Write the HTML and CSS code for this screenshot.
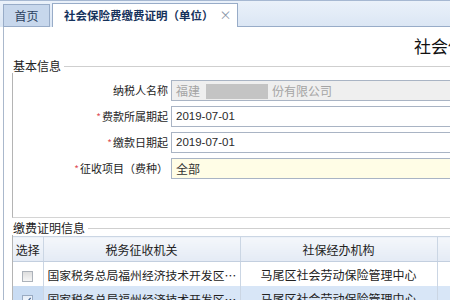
FILE: index.html
```html
<!DOCTYPE html>
<html lang="zh-CN">
<head>
<meta charset="utf-8">
<title>社会保险费缴费证明（单位）</title>
<link rel="stylesheet" href="styles.css">
</head>
<body>
<div class="tabs">
  <div class="tab home">首页</div>
  <div class="tab active">社会保险费缴费证明（单位）<span class="close">×</span></div>
  <div class="tab-rest"></div>
</div>
<div class="panel">
  <h1 class="title">社会保险费缴费证明</h1>
  <fieldset class="group basic">
    <legend>基本信息</legend>
    <div class="form">
      <label class="lbl">纳税人名称</label>
      <div class="input readonly">福建<span class="mask"></span>份有限公司</div>
      <label class="lbl"><i class="req">*</i>费款所属期起</label>
      <div class="input date">2019-07-01</div>
      <label class="lbl"><i class="req">*</i>缴款日期起</label>
      <div class="input date">2019-07-01</div>
      <label class="lbl"><i class="req">*</i>征收项目（费种）</label>
      <div class="input select">全部</div>
    </div>
  </fieldset>
  <fieldset class="group list">
    <legend>缴费证明信息</legend>
    <table class="grid">
      <colgroup>
        <col class="c-sel">
        <col class="c-org">
        <col class="c-org">
        <col class="c-more">
      </colgroup>
      <thead>
        <tr>
          <th>选择</th>
          <th>税务征收机关</th>
          <th>社保经办机构</th>
          <th></th>
        </tr>
      </thead>
      <tbody>
        <tr>
          <td class="sel"><span class="cb"></span></td>
          <td class="left"><div class="ell">国家税务总局福州经济技术开发区税务局</div></td>
          <td>马尾区社会劳动保险管理中心</td>
          <td></td>
        </tr>
        <tr class="selected">
          <td class="sel"><span class="cb checked"><svg viewBox="0 0 10 10" width="9" height="9"><path d="M1.5 5 L4 7.5 L8.5 2" fill="none" stroke="#4a6a96" stroke-width="1.4"/></svg></span></td>
          <td class="left"><div class="ell">国家税务总局福州经济技术开发区税务局</div></td>
          <td>马尾区社会劳动保险管理中心</td>
          <td></td>
        </tr>
      </tbody>
    </table>
  </fieldset>
</div>
</body>
</html>
```
FILE: styles.css
```css
html, body {
  margin: 0;
  padding: 0;
  overflow: hidden;
  background: #fff;
}
body {
  width: 1000px;
  font-family: "Noto Sans CJK SC", "Liberation Sans", sans-serif;
  font-size: 12px;
  color: #222;
}
.tabs {
  display: flex;
  align-items: flex-end;
  height: 26px;
  border-top: 1px solid #a6b8d2;
  background: linear-gradient(#eaf1fa, #dbe6f4);
  padding-left: 3px;
}
.tab {
  height: 23px;
  line-height: 22px;
  box-sizing: border-box;
  border: 1px solid #98acc8;
  border-bottom: none;
  white-space: nowrap;
}
.tab.home {
  width: 47px;
  text-align: center;
  background: #c7d7ec;
  color: #2b3f5e;
  border-bottom: 1px solid #98acc8;
}
.tab.active {
  margin-left: 2px;
  width: 186px;
  padding: 0 0 0 11px;
  background: #fff;
  font-weight: bold;
  font-size: 11.5px;
  color: #16325c;
  height: 24px;
}
.close {
  font-weight: normal;
  color: #8a96a8;
  margin-left: 6px;
  font-size: 12px;
}
.tab-rest {
  flex: 1;
  align-self: stretch;
  border-bottom: 1px solid #98acc8;
}
.panel {
  margin-left: 3px;
  width: 973px;
  border-left: 1px solid #aab8cc;
  min-height: 280px;
}
.title {
  margin: 0;
  padding-top: 9px;
  height: 20px;
  line-height: 20px;
  font-size: 17px;
  font-weight: normal;
  color: #111;
  text-align: center;
}
.group {
  margin: 3px 0 0 8px;
  padding: 0;
  border: none;
  border-top: 1px solid #cfcfcf;
  border-left: 1px solid #b4b4b4;
  min-width: 0;
}
.group legend {
  padding: 0 3px 0 1px;
  margin-left: -1px;
  font-size: 12px;
  line-height: 14px;
  color: #222;
}
.basic {
  padding: 7px 0 38px 0;
  border-bottom: 1px solid #d4d4d4;
}
.form {
  display: grid;
  grid-template-columns: 155px 1fr;
  column-gap: 3px;
  row-gap: 5px;
}
.lbl {
  text-align: right;
  font-size: 11px;
  line-height: 21px;
  color: #1e1e1e;
  white-space: nowrap;
}
.req {
  font-style: normal;
  color: #e0505a;
  font-size: 10px;
  margin-right: 1px;
}
.input {
  height: 21px;
  box-sizing: border-box;
  border: 1px solid #a9b4c4;
  padding-left: 4px;
  line-height: 19px;
  font-size: 12px;
  color: #333;
  white-space: nowrap;
}
.input.readonly {
  background: #efefef;
  color: #a4a4a4;
}
.mask {
  display: inline-block;
  width: 62px;
  height: 15px;
  background: #c4c4c4;
  vertical-align: -3px;
  margin: 0 4px 0 6px;
}
.input.date {
  font-family: "Liberation Sans", sans-serif;
  font-size: 11.5px;
  color: #2a2a2a;
}
.input.select {
  background: #fffde6;
}
.list {
  margin-top: 3px;
  padding: 1px 0 0 0;
}
.grid {
  border-collapse: collapse;
  table-layout: fixed;
  width: 623px;
  font-size: 12px;
}
.c-sel { width: 30px; }
.c-org { width: 197px; }
.c-more { width: 199px; }
.grid th, .grid td {
  padding: 0;
  text-align: center;
  border-right: 1px solid #cbd6e4;
  height: 24px;
  color: #222;
  white-space: nowrap;
  overflow: hidden;
}
.grid th {
  font-weight: normal;
  background: linear-gradient(#f4f7fb, #e4ebf5);
  border-top: 1px solid #cbd6e4;
  border-bottom: 1px solid #c3cfdf;
}
.grid td.left {
  text-align: left;
  padding-left: 4px;
}
.ell {
  overflow: hidden;
  text-overflow: ellipsis;
  white-space: nowrap;
  font-size: 11.8px;
}
.selected td {
  background: #d8e6f7;
}
.selected td.sel {
  background: #c9dcf3;
}
.cb {
  display: inline-flex;
  align-items: center;
  justify-content: center;
  width: 11px;
  height: 11px;
  box-sizing: border-box;
  border: 1px solid #acb2ba;
  background: linear-gradient(#dedede, #f6f6f6);
  vertical-align: middle;
}
.cb.checked {
  background: linear-gradient(#e6eef8, #fafcff);
  border-color: #9aabc2;
}
```
